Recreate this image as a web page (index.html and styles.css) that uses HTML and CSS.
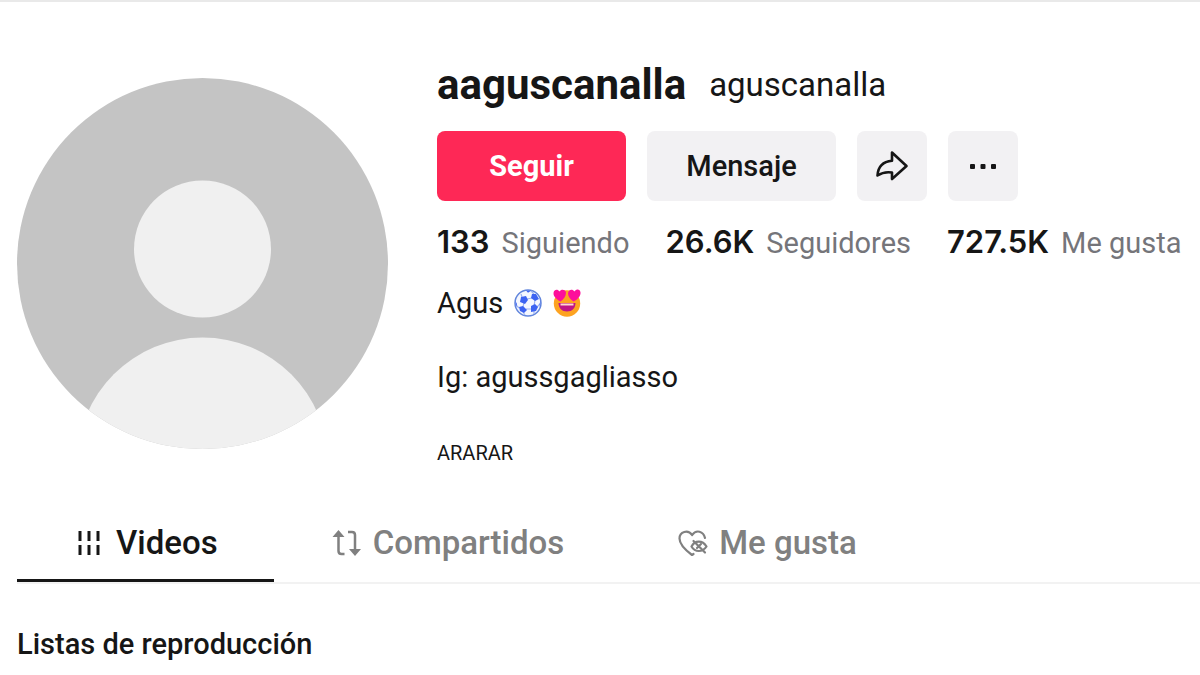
FILE: index.html
```
<!DOCTYPE html>
<html lang="es">
  <head>
    <meta charset="utf-8">
    <title>aaguscanalla</title>
    <link rel="stylesheet" href="styles.css">
  </head>
  <body>
    <main class="page">
      <header class="profile">
        <svg class="avatar" viewBox="0 0 371 371" role="img" aria-label="Avatar">
          <clipPath id="avatar-clip"><circle cx="185.500" cy="185.500" r="185.500"/></clipPath>
          <g clip-path="url(#avatar-clip)">
            <rect width="371" height="371" fill="#c4c4c4"/>
            <circle cx="185.500" cy="171" r="68.500" fill="#f0f0f0"/>
            <circle cx="185.500" cy="385" r="125.500" fill="#f0f0f0"/>
          </g>
        </svg>
        <div class="info">
          <div class="names">
            <h1 class="username">aaguscanalla</h1>
            <h2 class="nickname">aguscanalla</h2>
          </div>
          <div class="actions">
            <button class="btn btn-follow">Seguir</button>
            <button class="btn">Mensaje</button>
            <button class="btn btn-icon" aria-label="Compartir">
              <svg width="34" height="32" viewBox="0 0 34 32" fill="none" stroke="#161616" stroke-width="2.600" stroke-linejoin="round">
                <path d="M17 2.500 31.500 16 17 29V22.500C11 21.500 7 22.500 2.500 25.500 3 17 7.500 11.500 17 10.700Z"/>
              </svg>
            </button>
            <button class="btn btn-icon" aria-label="Más">
              <svg width="28" height="6" viewBox="0 0 28 6" fill="#161616">
                <rect x="1" y="1" width="5" height="5" rx="1"/>
                <rect x="11.500" y="1" width="5" height="5" rx="1"/>
                <rect x="22" y="1" width="5" height="5" rx="1"/>
              </svg>
            </button>
          </div>
          <div class="stats">
            <div class="stat"><strong>133</strong><span>Siguiendo</span></div>
            <div class="stat"><strong>26.6K</strong><span>Seguidores</span></div>
            <div class="stat"><strong>727.5K</strong><span>Me gusta</span></div>
          </div>
          <div class="bio">
            <p class="bio-line">
              Agus
              <svg class="emoji" viewBox="0 0 28 28" role="img" aria-label="Balón">
                <circle cx="14" cy="14" r="13" fill="#f4f7ff" stroke="#6286dc" stroke-width="1.500"/>
                <path d="M13 10 18 9M10 13l-1 5M12 20l5 0M21 11l-1 6M8 8 7 5M20 5l-3-3M5 19l-3-3M9 23l2 3M20 22l0 3M23 18l3-3" stroke="#9db3f0" stroke-width="1.200"/>
                <g fill="#3c63f2">
                  <path d="m7 8 5-1 2 4-3 4-5-2z"/>
                  <path d="m18 5 4 0 3 5-4 2-4-3z"/>
                  <path d="m5 18 4-1 4 4-3 3-4-2z"/>
                  <path d="m17 17 4-2 3 3-2 4-5 1z"/>
                  <path d="m12 1.500 5 .200-3 2z"/>
                  <path d="m1.500 12 1.500 3-1 3z"/>
                  <path d="m26.500 12-1 3 .500 3z"/>
                </g>
              </svg>
              <svg class="emoji" viewBox="0 0 28 28" role="img" aria-label="Cara enamorada">
                <circle cx="14" cy="14.500" r="13.200" fill="#fda321"/>
                <g fill="#fd0f9b">
                  <path d="M7.500 12.500C3 10 0 7 .600 3.500 1.200.500 4.500-.200 6.500 2.500 8-.200 12 .200 12.800 3 13.500 6.500 11 10 7.500 12.500Z"/>
                  <path d="M20.500 12.500C16.500 10 14.500 6.500 15.200 3.500 16 .300 19.500-.200 21.500 2.500 23.500-.200 27-.100 27.500 3.500 27.800 7 24.500 10.500 20.500 12.500Z"/>
                </g>
                <path d="M5.500 14h17c0 5-3.500 8.500-8.500 8.500s-8.500-3.500-8.500-8.500z" fill="#c01586"/>
                <path d="M7.500 14.500h13v2h-13z" fill="#ffd9cf"/>
              </svg>
            </p>
            <p class="bio-line">Ig: agussgagliasso</p>
            <p class="bio-line bio-small">ARARAR</p>
          </div>
        </div>
      </header>

      <nav class="tabs">
        <a class="tab active" href="#videos">
          <svg width="32" height="26" viewBox="-4 0 32 26" stroke="#161616" stroke-width="3">
            <path d="M3 1v10M12 1v10M21 1v10M3 15v10M12 15v10M21 15v10"/>
          </svg>
          Videos
        </a>
        <a class="tab" href="#compartidos">
          <svg width="32" height="26" viewBox="-2 0 32 26" fill="none" stroke="#808080" stroke-width="2.500">
            <path d="M6.500 4v17c0 2 1 3 3 3h3M16 2h4c2 0 3 1 3 3v17"/>
            <path d="M6.500 0 12.500 7H.500zM23 26l6-7H17z" fill="#808080" stroke="none"/>
          </svg>
          Compartidos
        </a>
        <a class="tab" href="#me-gusta">
          <svg width="32" height="26" viewBox="-2 0 32 26" fill="none" stroke="#808080" stroke-width="2.200" stroke-linecap="round" stroke-linejoin="round">
            <path d="M15.500 24 14 25C8 20.500 1.500 15 1.500 8.500 1.500 1.500 10-.800 14.200 5 18-.800 25.500 1 27 8"/>
            <path d="M13.500 16.500c3.500-6.500 11-6.500 15 0-4 6-11.500 6-15 0z"/>
            <path d="m15.500 11 11.500 11.500M19 18l4-4"/>
          </svg>
          Me gusta
        </a>
      </nav>

      <section class="playlists">
        <h2 class="section-title">Listas de reproducción</h2>
      </section>
    </main>
  </body>
</html>
```

FILE: styles.css
```
* {
  box-sizing: border-box;
}
body {
  margin: 0;
  background: #fff;
  color: #161616;
  font-family: Roboto, "Liberation Sans", sans-serif;
}
h1, h2, p {
  margin: 0;
}
.page {
  border-top: 2px solid #e9e9e9;
}

.profile {
  display: flex;
  align-items: flex-start;
  gap: 49px;
  padding: 60px 17px 0;
}
.avatar {
  flex: none;
  width: 371px;
  margin-top: 16px;
}
.info {
  flex: 1;
}
.names {
  display: flex;
  align-items: center;
  gap: 23px;
  line-height: 46px;
}
.username {
  font-size: 42px;
  font-weight: 700;
}
.nickname {
  font-size: 33px;
  font-weight: 400;
}

.actions {
  display: flex;
  gap: 21px;
  margin-top: 23px;
}
.btn {
  display: flex;
  align-items: center;
  justify-content: center;
  width: 189px;
  height: 70px;
  padding: 0;
  border: none;
  border-radius: 8px;
  background: #f2f1f3;
  color: #161616;
  font-family: inherit;
  font-size: 29px;
  font-weight: 500;
  cursor: pointer;
}
.btn-follow {
  background: #fe2856;
  color: #fff;
  font-weight: 700;
}
.btn-icon {
  width: 70px;
}

.stats {
  display: flex;
  gap: 36px;
  margin-top: 23px;
  line-height: 36px;
  white-space: nowrap;
}
.stat {
  display: flex;
  align-items: baseline;
  gap: 12px;
}
.stat strong {
  font-family: Inter, Roboto, sans-serif;
  font-size: 31px;
  font-weight: 600;
}
.stat span {
  color: #75757a;
  font-size: 29px;
}

.bio {
  margin-top: 24px;
}
.bio-line {
  display: flex;
  align-items: center;
  gap: 11px;
  margin-bottom: 38px;
  font-size: 29px;
  line-height: 36px;
}
.bio-small {
  margin-bottom: 0;
  font-size: 20px;
  line-height: 40px;
}
.emoji {
  width: 28px;
  height: 28px;
}

.tabs {
  display: flex;
  margin: 33px 0 0 17px;
  border-bottom: 2px solid #f2f2f2;
}
.tab {
  display: flex;
  align-items: center;
  gap: 11px;
  height: 76px;
  padding: 0 56px;
  border-bottom: 3px solid transparent;
  color: #808080;
  font-size: 33px;
  font-weight: 500;
  text-decoration: none;
}
.tab.active {
  border-color: #161616;
  color: #161616;
}

.playlists {
  padding: 40px 17px 0;
}
.section-title {
  font-size: 29px;
  font-weight: 500;
  line-height: 40px;
}
```
